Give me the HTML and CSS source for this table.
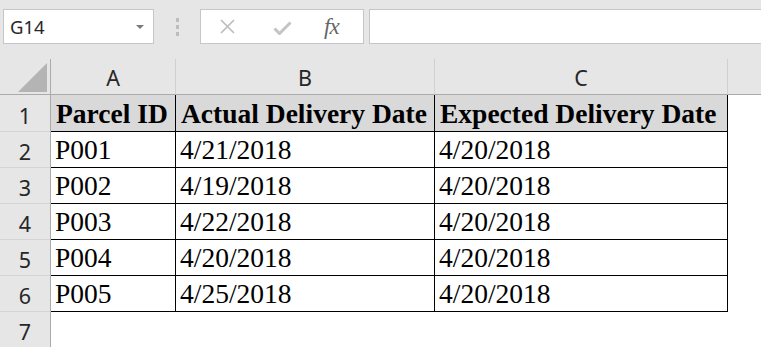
FILE: index.html
```html
<!DOCTYPE html>
<html>
<head>
<meta charset="utf-8">
<link rel="stylesheet" href="styles.css">
</head>
<body>
<div class="toolbar">
  <div class="namebox"><span class="ref">G14</span><span class="caret"></span></div>
  <div class="grip"><i></i><i></i><i></i></div>
  <div class="fbuttons">
    <svg class="ic-x" width="17" height="15" viewBox="0 0 17 15"><path d="M2 1 L15 14 M15 1 L2 14" stroke="#bdbdbd" stroke-width="1.7" fill="none"/></svg>
    <svg class="ic-check" width="19" height="14" viewBox="0 0 19 14"><path d="M1.5 7.5 L6.5 12.5 L17.5 1.5" stroke="#c4c4c4" stroke-width="3" fill="none"/></svg>
    <span class="fx">fx</span>
  </div>
  <div class="finput"></div>
</div>
<div class="sheet">
  <div class="corner"><span class="tri"></span></div>
  <div class="ch">A</div>
  <div class="ch">B</div>
  <div class="ch">C</div>
  <div class="ch last"></div>

  <div class="rh">1</div>
  <div class="cell head">Parcel ID</div>
  <div class="cell head">Actual Delivery Date</div>
  <div class="cell head">Expected Delivery Date</div>
  <div class="empty"></div>

  <div class="rh">2</div>
  <div class="cell">P001</div>
  <div class="cell">4/21/2018</div>
  <div class="cell">4/20/2018</div>
  <div class="empty"></div>

  <div class="rh">3</div>
  <div class="cell">P002</div>
  <div class="cell">4/19/2018</div>
  <div class="cell">4/20/2018</div>
  <div class="empty"></div>

  <div class="rh">4</div>
  <div class="cell">P003</div>
  <div class="cell">4/22/2018</div>
  <div class="cell">4/20/2018</div>
  <div class="empty"></div>

  <div class="rh">5</div>
  <div class="cell">P004</div>
  <div class="cell">4/20/2018</div>
  <div class="cell">4/20/2018</div>
  <div class="empty"></div>

  <div class="rh">6</div>
  <div class="cell">P005</div>
  <div class="cell">4/25/2018</div>
  <div class="cell">4/20/2018</div>
  <div class="empty"></div>

  <div class="rh">7</div>
  <div class="empty"></div>
  <div class="empty"></div>
  <div class="empty"></div>
  <div class="empty"></div>
</div>
</body>
</html>
```

FILE: styles.css
```css
* { box-sizing: border-box; }
html, body { margin: 0; padding: 0; background: #fff; overflow: hidden; }
body { width: 761px; height: 347px; }

.toolbar {
  height: 59px;
  background: #e6e6e6;
  display: flex;
  align-items: flex-start;
  padding-top: 9px;
  padding-left: 3px;
}
.namebox {
  width: 151px;
  height: 35px;
  background: #fff;
  border: 1px solid #c6c6c6;
  display: flex;
  align-items: center;
  justify-content: space-between;
  padding: 0 9px 0 6px;
}
.ref {
  font-family: "Noto Sans", "Open Sans", sans-serif;
  font-size: 18.5px;
  color: #262626;
  line-height: 1;
  padding-top: 1px;
}
.caret {
  width: 0; height: 0;
  border-left: 4px solid transparent;
  border-right: 4px solid transparent;
  border-top: 4px solid #7a7a7a;
  margin-top: 1px;
}
.grip {
  width: 46px;
  height: 35px;
  display: flex;
  flex-direction: column;
  align-items: center;
  justify-content: center;
  gap: 3px;
}
.grip i {
  display: block;
  width: 3px; height: 4px;
  background: #bdbdbd;
}
.fbuttons {
  width: 164px;
  height: 35px;
  background: #fff;
  border: 1px solid #c6c6c6;
  display: flex;
  align-items: center;
  padding-left: 18px;
}
.ic-check { margin-left: 37px; margin-top: 3px; }
.fx {
  margin-left: 32px;
  font-family: "Liberation Serif", serif;
  font-style: italic;
  font-size: 23px;
  color: #666;
  letter-spacing: -1px;
  line-height: 1;
}
.finput {
  flex: 1;
  margin-left: 5px;
  height: 35px;
  background: #fff;
  border: 1px solid #c6c6c6;
  border-right: none;
}

.sheet {
  display: grid;
  grid-template-columns: 51px 125px 259px 293px 1fr;
  grid-template-rows: 36px 37px repeat(6, 36px);
}
.corner {
  background: #e6e6e6;
  border-right: 1px solid #ababab;
  border-bottom: 1px solid #ababab;
  position: relative;
}
.tri {
  position: absolute;
  left: 18px;
  top: 4px;
  width: 0; height: 0;
  border-left: 29px solid transparent;
  border-bottom: 29px solid #b4b4b4;
}
.ch {
  background: #e6e6e6;
  border-right: 1px solid #d0d0d0;
  border-bottom: 1px solid #ababab;
  font-family: "Noto Sans", "Open Sans", sans-serif;
  font-size: 21.5px;
  color: #262626;
  display: flex;
  align-items: flex-end;
  justify-content: center;
  line-height: 1;
  padding-bottom: 6px;
}
.ch.last { border-right: none; }
.rh {
  background: #e6e6e6;
  border-right: 1px solid #ababab;
  border-bottom: 1px solid #d4d4d4;
  font-family: "Noto Sans", "Open Sans", sans-serif;
  font-size: 21.5px;
  color: #262626;
  display: flex;
  align-items: flex-end;
  justify-content: center;
  line-height: 1;
  padding-bottom: 5px;
}
.cell {
  border-right: 1px solid #000;
  border-bottom: 1px solid #000;
  font-family: "Liberation Serif", "Times New Roman", serif;
  font-size: 27.5px;
  color: #000;
  display: flex;
  align-items: flex-end;
  padding: 0 0 2px 4px;
  white-space: nowrap;
  line-height: 1.1;
}
.cell.head {
  background: #d9d9d9;
  font-weight: bold;
  padding-left: 5px;
}
.empty { background: #fff; }
```
